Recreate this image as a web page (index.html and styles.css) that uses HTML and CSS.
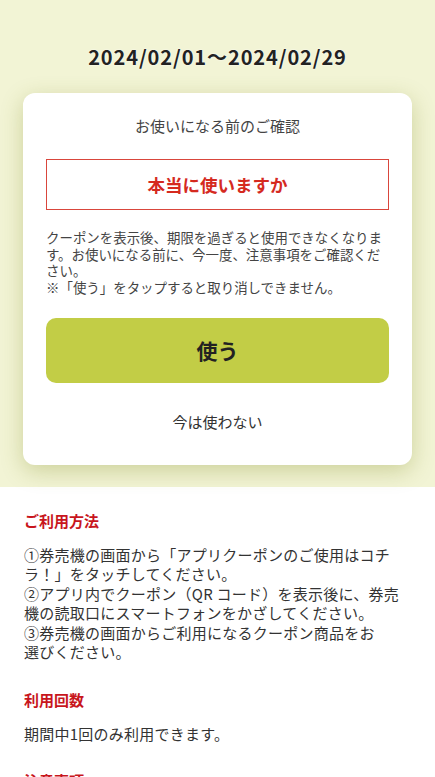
FILE: index.html
```html
<!DOCTYPE html>
<html lang="ja">
<head>
    <meta charset="UTF-8">
    <meta name="viewport" content="width=device-width, initial-scale=1.0">
    <title>クーポン</title>
    <link rel="stylesheet" href="styles.css">
</head>
<body>
    <div class="overlay">
        <h2 class="period">2024/02/01～2024/02/29</h2>
        <div class="card">
            <p class="card-title">お使いになる前のご確認</p>
            <div class="confirm-box">本当に使いますか</div>
            <p class="notice">クーポンを表示後、期限を過ぎると使用できなくなります。お使いになる前に、今一度、注意事項をご確認ください。<br>※「使う」をタップすると取り消しできません。</p>
            <button class="use-btn" type="button">使う</button>
            <button class="later-btn" type="button">今は使わない</button>
        </div>
    </div>
    <div class="content">
        <h3>ご利用方法</h3>
        <p>①券売機の画面から「アプリクーポンのご使用はコチラ！」をタッチしてください。<br>②アプリ内でクーポン（QR コード）を表示後に、券売機の読取口にスマートフォンをかざしてください。<br>③券売機の画面からご利用になるクーポン商品をお<span class="nowrap">選びください。</span></p>
        <h3>利用回数</h3>
        <p>期間中1回のみ利用できます。</p>
        <h3>注意事項</h3>
    </div>
</body>
</html>
```

FILE: styles.css
```css
body {
    margin: 0;
    font-family: 'Noto Sans CJK JP', 'Noto Sans', sans-serif;
    color: #333;
    background: #ffffff;
}

.overlay {
    background: #f2f4d5;
    padding: 41px 23px 22px;
}

.period {
    margin: 0 0 20px;
    text-align: center;
    font-size: 20px;
    font-weight: bold;
    line-height: 32px;
    color: #222;
    letter-spacing: 0.9px;
    text-shadow: 0 0 2px #ffffff;
}

.card {
    background-color: #ffffff;
    border-radius: 12px;
    box-shadow: 0 6px 22px rgba(120, 130, 20, 0.3);
    padding: 22px 23px 32px;
}

.card-title {
    margin: 0;
    text-align: center;
    font-size: 15px;
    line-height: 22px;
    color: #444;
}

.confirm-box {
    box-sizing: border-box;
    margin-top: 22px;
    border: 1.5px solid #d9463c;
    height: 51px;
    display: flex;
    justify-content: center;
    align-items: center;
    color: #d52a1f;
    font-size: 17.5px;
    font-weight: bold;
}

.notice {
    margin: 19px 0 0;
    font-size: 13.45px;
    line-height: 16.7px;
    color: #444;
}

.use-btn {
    display: block;
    width: 100%;
    height: 65px;
    margin-top: 22px;
    border: none;
    border-radius: 10px;
    background-color: #c2cd46;
    color: #222;
    font-family: inherit;
    font-size: 21px;
    font-weight: bold;
}

.later-btn {
    display: block;
    width: 100%;
    margin-top: 28px;
    padding: 0;
    border: none;
    background: none;
    color: #333;
    font-family: inherit;
    font-size: 15px;
    line-height: 22px;
}

.content {
    padding: 22px 34px 0 24px;
}

.content h3 {
    margin: 0;
    font-size: 15px;
    line-height: 24px;
    color: #c8161d;
}

.content p {
    margin: 12px 0 26px;
    font-size: 15px;
    line-height: 19.5px;
    letter-spacing: 0.25px;
    color: #333;
}

.nowrap {
    white-space: nowrap;
}
```
